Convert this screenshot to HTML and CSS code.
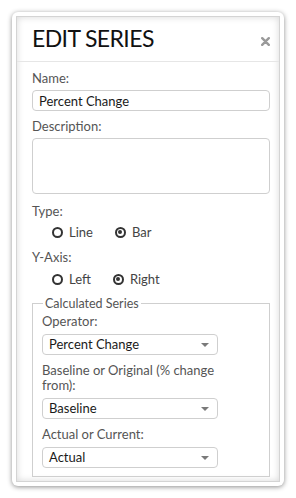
FILE: index.html
```html
<!DOCTYPE html>
<html lang="en">
<head>
    <meta charset="UTF-8">
    <meta name="viewport" content="width=device-width, initial-scale=1.0">
    <title>Edit Series</title>
    <link rel="stylesheet" href="styles.css">
</head>
<body>
    <div class="frame">
        <div class="modal">
            <div class="modal-header">
                <h2>EDIT SERIES</h2>
                <svg class="close" width="9" height="9" viewBox="0 0 9 9">
                    <path d="M1.2 1.2 L7.8 7.8 M7.8 1.2 L1.2 7.8" stroke="#9a9a9a" stroke-width="2.4" stroke-linecap="round"/>
                </svg>
            </div>

            <div class="modal-body">
                <label class="field-label">Name:</label>
                <input class="text-input" type="text" value="Percent Change">

                <label class="field-label">Description:</label>
                <textarea class="text-area"></textarea>

                <label class="field-label">Type:</label>
                <div class="radio-row">
                    <label class="radio"><input type="radio" name="type"> Line</label>
                    <label class="radio"><input type="radio" name="type" checked> Bar</label>
                </div>

                <label class="field-label">Y-Axis:</label>
                <div class="radio-row">
                    <label class="radio"><input type="radio" name="axis"> Left</label>
                    <label class="radio"><input type="radio" name="axis" checked> Right</label>
                </div>

                <fieldset class="calc">
                    <legend>Calculated Series</legend>

                    <label class="field-label">Operator:</label>
                    <div class="select">Percent Change<span class="caret"></span></div>

                    <label class="field-label">Baseline or Original (% change from):</label>
                    <div class="select">Baseline<span class="caret"></span></div>

                    <label class="field-label">Actual or Current:</label>
                    <div class="select">Actual<span class="caret"></span></div>
                </fieldset>
            </div>
        </div>
    </div>
</body>
</html>
```

FILE: styles.css
```css
body {
    margin: 0;
    padding: 12px;
    background: #fff;
    font-family: 'Lato', 'Open Sans', sans-serif;
    color: #555;
}
.frame {
    width: 264px;
    height: 466px;
    padding: 4px;
    background: #fff;
    border-radius: 6px;
    box-shadow: 0 1px 5px rgba(0, 0, 0, 0.45);
}
.modal {
    height: 100%;
    box-sizing: border-box;
    border: 1px solid #d4d4d4;
    box-shadow: inset 0 0 7px rgba(0, 0, 0, 0.16);
    background: #fff;
}
.modal-header {
    display: flex;
    align-items: center;
    justify-content: space-between;
    padding: 7px 9px 8px 15px;
    border-bottom: 1px solid #e6e6e6;
}
.modal-header h2 {
    margin: 0;
    font-size: 23px;
    font-weight: normal;
    line-height: 29px;
    color: #111;
    letter-spacing: -0.6px;
}
.close {
    margin-top: 5px;
}
.modal-body {
    padding: 8px 9px 0 15px;
}
.field-label {
    display: block;
    font-size: 13px;
    line-height: 16px;
    margin-bottom: 4px;
    color: #555;
}
.text-input, .text-area {
    display: block;
    width: 100%;
    box-sizing: border-box;
    margin: 0 0 7px 0;
    border: 1px solid #cfcfcf;
    border-radius: 4px;
    font-family: inherit;
    font-size: 13px;
    color: #1a1a1a;
    outline: none;
}
.text-input {
    height: 21px;
    padding: 0 6px;
}
.text-area {
    height: 56px;
    margin-bottom: 9px;
    resize: none;
}
.radio-row {
    display: flex;
    gap: 22px;
    padding-left: 20px;
    height: 18px;
    align-items: center;
    margin: 4px 0 8px 0;
}
.radio-row:last-of-type {
    margin-top: 5px;
}
.radio {
    display: flex;
    align-items: center;
    gap: 6px;
    font-size: 13px;
    color: #444;
}
.radio input {
    appearance: none;
    -webkit-appearance: none;
    margin: 0;
    width: 11px;
    height: 11px;
    border: 2px solid #333;
    border-radius: 50%;
    box-sizing: border-box;
    position: relative;
}
.radio input:checked::after {
    content: "";
    position: absolute;
    left: 1.5px;
    top: 1.5px;
    width: 4px;
    height: 4px;
    border-radius: 50%;
    background: #333;
}
.calc {
    margin: 6px 0 0 0;
    padding: 3px 9px 8px 9px;
    border: 1px solid #cfcfcf;
}
.calc legend {
    font-size: 12.5px;
    padding: 0 2px;
    margin-left: 1px;
    color: #555;
}
.calc .field-label {
    width: 176px;
    line-height: 15px;
    margin-bottom: 5px;
}
.select {
    position: relative;
    width: 176px;
    height: 21px;
    box-sizing: border-box;
    border: 1px solid #cfcfcf;
    border-radius: 4px;
    padding-left: 6px;
    font-size: 13px;
    line-height: 19px;
    color: #1a1a1a;
    margin-bottom: 8px;
}
.select:last-child {
    margin-bottom: 0;
}
.caret {
    position: absolute;
    right: 8px;
    top: 8px;
    border-left: 4px solid transparent;
    border-right: 4px solid transparent;
    border-top: 4px solid #7a7a7a;
}
```
